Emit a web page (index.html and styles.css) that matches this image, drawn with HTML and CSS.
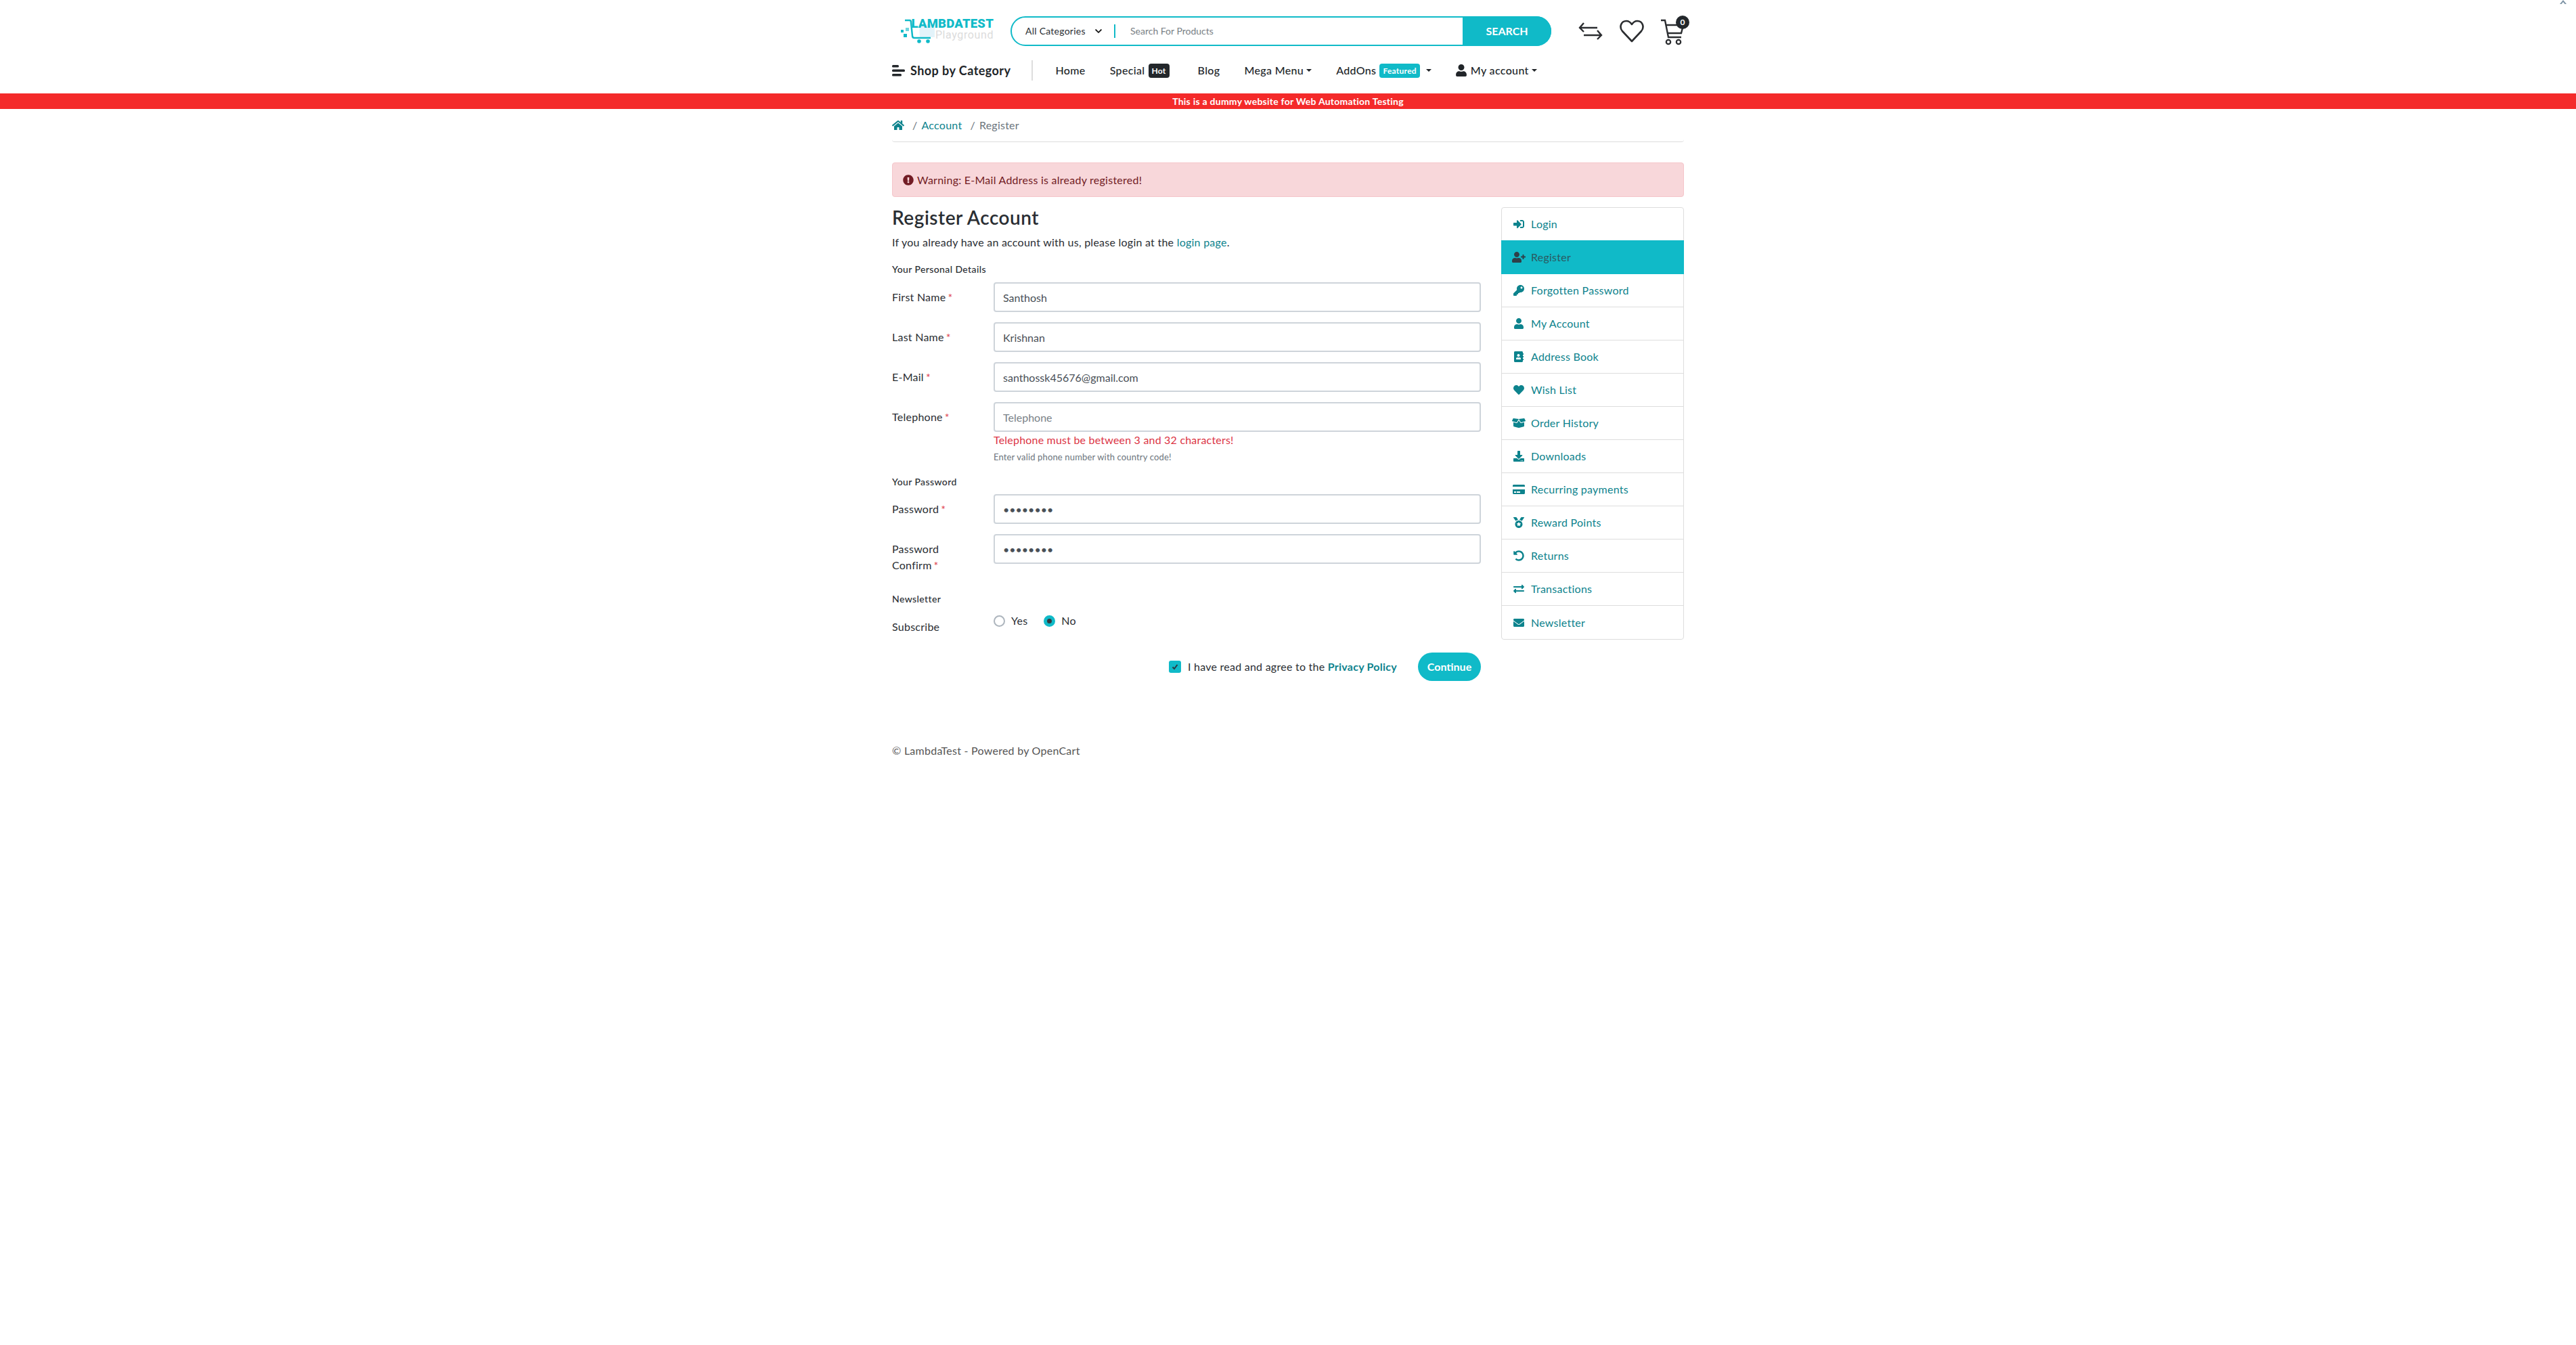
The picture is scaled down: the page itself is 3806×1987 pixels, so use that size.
FILE: index.html
```html
<!DOCTYPE html>
<html lang="en">
<head>
    <meta charset="UTF-8">
    <title>Register Account</title>
    <link rel="stylesheet" href="styles.css">
</head>
<body>
    <svg class="corner-mark" viewBox="0 0 10 6"><path d="M0 6 L5 0 L10 6 L7.5 6 L5 3 L2.5 6 Z"/></svg>

    <header class="wrap">
        <div class="top-row">
            <a class="logo" href="#">
                <svg class="logo-cart" viewBox="0 0 60 50">
                    <path d="M37 23 H62 L60 42 H38 Z" fill="#e3f3fa"/>
                    <path d="M16 17 H23 Q25 17 25 20 L27 40 Q27 43 30 43 H54" fill="none" stroke="#10bac8" stroke-width="2.5"/>
                    <rect x="10" y="31" width="4" height="4" fill="#10bac8"/>
                    <rect x="17" y="28" width="5" height="5" fill="#6fd5de"/>
                    <rect x="14" y="37" width="5" height="5" fill="#10bac8"/>
                    <circle cx="37" cy="48" r="2.8" fill="#10bac8"/>
                    <circle cx="50" cy="48" r="2.8" fill="#10bac8"/>
                </svg>
                <span class="logo-name">LAMBDATEST</span>
                <span class="logo-sub">Playground</span>
            </a>
            <form class="search">
                <div class="search-cat">All Categories
                    <svg viewBox="0 0 448 512"><path d="M207 381.5L12.7 187.1c-9.4-9.4-9.4-24.6 0-33.9l22.7-22.7c9.4-9.4 24.5-9.4 33.9 0L224 284.5l154.7-154c9.4-9.3 24.5-9.3 33.9 0l22.7 22.7c9.4 9.4 9.4 24.6 0 33.9L241 381.5c-9.4 9.4-24.6 9.4-34 0z"/></svg>
                </div>
                <input class="search-input" type="text" placeholder="Search For Products">
                <button class="search-btn" type="button">SEARCH</button>
            </form>
            <div class="actions">
                <svg class="act-compare" viewBox="0 0 36 28"><path d="M8 2 L2 9 L8 15 M2 9 H28 M28 13 L34 20 L28 26 M34 20 H8" fill="none" stroke="#2b2d30" stroke-width="2.4"/></svg>
                <svg class="act-heart" viewBox="0 0 36 36"><path d="M18 33 L4 18 C-1 12 2 3 10 3 C14 3 16 5 18 8 C20 5 22 3 26 3 C34 3 37 12 32 18 Z" fill="none" stroke="#2b2d30" stroke-width="2.6" stroke-linejoin="round"/></svg>
                <div class="cart">
                    <svg viewBox="0 0 36 42"><path d="M1 5 H7 L12 30 H31 M9 12 H34 L31 24 H11" fill="none" stroke="#2b2d30" stroke-width="2.4"/><circle cx="12" cy="37" r="3.2" fill="none" stroke="#2b2d30" stroke-width="2.2"/><circle cx="27" cy="37" r="3.2" fill="none" stroke="#2b2d30" stroke-width="2.2"/></svg>
                    <span class="cart-count">0</span>
                </div>
            </div>
        </div>

        <nav class="nav-row">
            <a class="shop-by" href="#">
                <svg viewBox="0 0 20 18"><rect x="0" y="1" width="10" height="3.4" rx="1.5"/><rect x="0" y="7.5" width="19" height="3.4" rx="1.5"/><rect x="0" y="14" width="14" height="3.4" rx="1.5"/></svg>
                Shop by Category
            </a>
            <ul class="menu">
                <li><a href="#">Home</a></li>
                <li class="menu-hot"><a href="#">Special</a><span class="tag tag-dark">Hot</span></li>
                <li><a href="#">Blog</a></li>
                <li><a href="#">Mega Menu</a><i class="caret"></i></li>
                <li><a href="#">AddOns</a><span class="tag tag-teal">Featured</span><i class="caret caret-far"></i></li>
                <li><svg class="menu-user" viewBox="0 0 448 512"><path d="M224 256c70.7 0 128-57.3 128-128S294.7 0 224 0 96 57.3 96 128s57.3 128 128 128zm89.6 32h-16.7c-22.2 10.2-46.9 16-72.9 16s-50.6-5.8-72.9-16h-16.7C60.2 288 0 348.2 0 422.4V464c0 26.5 21.5 48 48 48h352c26.5 0 48-21.5 48-48v-41.6c0-74.2-60.2-134.4-134.4-134.4z"/></svg><a href="#">My account</a><i class="caret"></i></li>
            </ul>
        </nav>
    </header>

    <div class="notice">This is a dummy website for Web Automation Testing</div>

    <main class="wrap">
        <div class="crumbs">
            <svg viewBox="0 0 576 512"><path d="M280.37 148.26L96 300.11V464a16 16 0 0 0 16 16l112.06-.29a16 16 0 0 0 15.92-16V368a16 16 0 0 1 16-16h64a16 16 0 0 1 16 16v95.64a16 16 0 0 0 16 16.05L464 480a16 16 0 0 0 16-16V300L295.67 148.26a12.19 12.19 0 0 0-15.3 0zM571.6 251.47L488 182.56V44.05a12 12 0 0 0-12-12h-56a12 12 0 0 0-12 12v72.61L318.47 43a48 48 0 0 0-61 0L4.34 251.47a12 12 0 0 0-1.6 16.9l25.5 31A12 12 0 0 0 45.15 301l235.22-193.74a12.19 12.19 0 0 1 15.3 0L530.9 301a12 12 0 0 0 16.9-1.6l25.5-31a12 12 0 0 0-1.7-16.93z"/></svg>
            <span class="crumb-sep">/</span><a href="#">Account</a>
            <span class="crumb-sep">/</span><span class="crumb-now">Register</span>
        </div>

        <div class="alert">
            <svg viewBox="0 0 512 512"><path d="M504 256c0 136.997-111.043 248-248 248S8 392.997 8 256C8 119.083 119.043 8 256 8s248 111.083 248 248zm-248 50c-25.405 0-46 20.595-46 46s20.595 46 46 46 46-20.595 46-46-20.595-46-46-46zm-43.673-165.346l7.418 136c.347 6.364 5.609 11.346 11.982 11.346h48.546c6.373 0 11.635-4.982 11.982-11.346l7.418-136c.375-6.874-5.098-12.654-11.982-12.654h-63.383c-6.884 0-12.356 5.78-11.981 12.654z"/></svg>
            Warning: E-Mail Address is already registered!
        </div>

        <div class="columns">
            <section class="content">
                <h1>Register Account</h1>
                <p class="intro">If you already have an account with us, please login at the <a href="#">login page</a>.</p>

                <form>
                    <h2 class="legend">Your Personal Details</h2>
                    <div class="field">
                        <label>First Name<b>*</b></label>
                        <div class="field-box"><input type="text" value="Santhosh"></div>
                    </div>
                    <div class="field">
                        <label>Last Name<b>*</b></label>
                        <div class="field-box"><input type="text" value="Krishnan"></div>
                    </div>
                    <div class="field">
                        <label>E-Mail<b>*</b></label>
                        <div class="field-box"><input type="text" value="santhossk45676@gmail.com"></div>
                    </div>
                    <div class="field field-tel">
                        <label>Telephone<b>*</b></label>
                        <div class="field-box">
                            <input type="text" placeholder="Telephone">
                            <div class="error">Telephone must be between 3 and 32 characters!</div>
                            <small class="help">Enter valid phone number with country code!</small>
                        </div>
                    </div>

                    <h2 class="legend legend-pass">Your Password</h2>
                    <div class="field">
                        <label>Password<b>*</b></label>
                        <div class="field-box"><input type="password" value="12345678"></div>
                    </div>
                    <div class="field">
                        <label class="label-narrow">Password Confirm<b>*</b></label>
                        <div class="field-box"><input type="password" value="12345678"></div>
                    </div>

                    <h2 class="legend legend-news">Newsletter</h2>
                    <div class="field field-sub">
                        <label>Subscribe</label>
                        <div class="radios">
                            <span class="radio"></span><span class="radio-text">Yes</span>
                            <span class="radio radio-on"></span><span class="radio-text">No</span>
                        </div>
                    </div>

                    <div class="agree">
                        <span class="check"><svg viewBox="0 0 12 12"><path d="M2.5 6.5 L5 9 L9.5 3" fill="none" stroke="#2a3a44" stroke-width="2"/></svg></span>
                        <span>I have read and agree to the <a href="#">Privacy Policy</a></span>
                        <button class="continue" type="button">Continue</button>
                    </div>
                </form>
            </section>

            <aside class="side">
                <a class="side-item" href="#"><svg viewBox="0 0 512 512"><path d="M416 448h-84c-6.6 0-12-5.4-12-12v-40c0-6.6 5.4-12 12-12h84c17.7 0 32-14.3 32-32V160c0-17.7-14.3-32-32-32h-84c-6.6 0-12-5.4-12-12V76c0-6.6 5.4-12 12-12h84c53 0 96 43 96 96v192c0 53-43 96-96 96zm-47-201L201 79c-15-15-41-4.5-41 17v96H24c-13.3 0-24 10.7-24 24v96c0 13.3 10.7 24 24 24h136v96c0 21.5 26 32 41 17l168-168c9.3-9.4 9.3-24.6 0-34z"/></svg>Login</a>
                <a class="side-item active" href="#"><svg viewBox="0 0 640 512"><path d="M624 208h-64v-64c0-8.8-7.2-16-16-16h-32c-8.8 0-16 7.2-16 16v64h-64c-8.8 0-16 7.2-16 16v32c0 8.8 7.2 16 16 16h64v64c0 8.8 7.2 16 16 16h32c8.8 0 16-7.2 16-16v-64h64c8.8 0 16-7.2 16-16v-32c0-8.8-7.2-16-16-16zm-400 48c70.7 0 128-57.3 128-128S294.7 0 224 0 96 57.3 96 128s57.3 128 128 128zm89.6 32h-16.7c-22.2 10.2-46.9 16-72.9 16s-50.6-5.8-72.9-16h-16.7C60.2 288 0 348.2 0 422.4V464c0 26.5 21.5 48 48 48h352c26.5 0 48-21.5 48-48v-41.6c0-74.2-60.2-134.4-134.4-134.4z"/></svg>Register</a>
                <a class="side-item" href="#"><svg viewBox="0 0 512 512"><path d="M512 176.001C512 273.203 433.202 352 336 352c-11.22 0-22.19-1.062-32.827-3.069l-24.012 27.014A23.999 23.999 0 0 1 261.223 384H224v40c0 13.255-10.745 24-24 24h-40v40c0 13.255-10.745 24-24 24H24c-13.255 0-24-10.745-24-24v-78.059c0-6.365 2.529-12.47 7.029-16.971l161.802-161.802C163.108 213.814 160 195.271 160 176 160 78.798 238.797.001 335.999 0 433.488-.001 512 78.511 512 176.001zM336 128c0 26.51 21.49 48 48 48s48-21.49 48-48-21.49-48-48-48-48 21.49-48 48z"/></svg>Forgotten Password</a>
                <a class="side-item" href="#"><svg viewBox="0 0 448 512"><path d="M224 256c70.7 0 128-57.3 128-128S294.7 0 224 0 96 57.3 96 128s57.3 128 128 128zm89.6 32h-16.7c-22.2 10.2-46.9 16-72.9 16s-50.6-5.8-72.9-16h-16.7C60.2 288 0 348.2 0 422.4V464c0 26.5 21.5 48 48 48h352c26.5 0 48-21.5 48-48v-41.6c0-74.2-60.2-134.4-134.4-134.4z"/></svg>My Account</a>
                <a class="side-item" href="#"><svg viewBox="0 0 448 512"><path d="M436 160c6.6 0 12-5.4 12-12v-40c0-6.6-5.4-12-12-12h-20V48c0-26.5-21.5-48-48-48H48C21.5 0 0 21.5 0 48v416c0 26.5 21.5 48 48 48h320c26.5 0 48-21.5 48-48v-48h20c6.6 0 12-5.4 12-12v-40c0-6.6-5.4-12-12-12h-20v-64h20c6.6 0 12-5.4 12-12v-40c0-6.6-5.4-12-12-12h-20v-64h20zm-228-32c35.3 0 64 28.7 64 64s-28.7 64-64 64-64-28.7-64-64 28.7-64 64-64zm112 236.8c0 10.6-10 19.2-22.4 19.2H118.4C106 384 96 375.4 96 364.8v-19.2c0-31.8 30.1-57.6 67.2-57.6h5c12.3 5.1 25.7 8 39.8 8s27.6-2.9 39.8-8h5c37.1 0 67.2 25.8 67.2 57.6v19.2z"/></svg>Address Book</a>
                <a class="side-item" href="#"><svg viewBox="0 0 512 512"><path d="M462.3 62.6C407.5 15.9 326 24.3 275.7 76.2L256 96.5l-19.7-20.3C186.1 24.3 104.5 15.9 49.7 62.6c-62.8 53.6-66.1 149.8-9.9 207.9l193.5 199.8c12.5 12.9 32.8 12.9 45.3 0l193.5-199.8c56.3-58.1 53-154.3-9.8-207.9z"/></svg>Wish List</a>
                <a class="side-item" href="#"><svg viewBox="0 0 640 512"><path d="M425.7 256c-16.9 0-32.8-9-41.4-23.4L320 126l-64.2 106.6c-8.7 14.5-24.6 23.5-41.5 23.5-4.5 0-9-.6-13.3-1.9L64 215v178c0 14.7 10 27.5 24.2 31l216.2 54.1c10.2 2.5 20.9 2.5 31 0L551.8 424c14.2-3.6 24.2-16.4 24.2-31V215l-137 39.1c-4.3 1.3-8.8 1.9-13.3 1.9zm212.6-112.2L586.8 41c-3.1-6.2-9.8-9.8-16.7-8.9L320 64l91.7 152.1c3.8 6.3 11.4 9.3 18.5 7.3l197.9-56.5c9.9-2.9 14.7-13.9 10.2-23.1zM53.2 41L1.7 143.8c-4.6 9.2.3 20.2 10.1 23l197.9 56.5c7.1 2 14.7-1 18.5-7.3L320 64 69.8 32.1c-6.9-.8-13.5 2.7-16.6 8.9z"/></svg>Order History</a>
                <a class="side-item" href="#"><svg viewBox="0 0 512 512"><path d="M216 0h80c13.3 0 24 10.7 24 24v168h87.7c17.8 0 26.7 21.5 14.1 34.1L269.7 378.3c-7.5 7.5-19.8 7.5-27.3 0L90.1 226.1c-12.6-12.6-3.7-34.1 14.1-34.1H192V24c0-13.3 10.7-24 24-24zm296 376v112c0 13.3-10.7 24-24 24H24c-13.3 0-24-10.7-24-24V376c0-13.3 10.7-24 24-24h146.7l49 49c20.1 20.1 52.5 20.1 72.6 0l49-49H488c13.3 0 24 10.7 24 24zm-124 88c0-11-9-20-20-20s-20 9-20 20 9 20 20 20 20-9 20-20zm64 0c0-11-9-20-20-20s-20 9-20 20 9 20 20 20 20-9 20-20z"/></svg>Downloads</a>
                <a class="side-item" href="#"><svg viewBox="0 0 576 512"><path d="M0 432c0 26.5 21.5 48 48 48h480c26.5 0 48-21.5 48-48V256H0v176zm192-68c0-6.6 5.4-12 12-12h136c6.6 0 12 5.4 12 12v40c0 6.6-5.4 12-12 12H204c-6.6 0-12-5.4-12-12v-40zm-128 0c0-6.6 5.4-12 12-12h72c6.6 0 12 5.4 12 12v40c0 6.6-5.4 12-12 12H76c-6.6 0-12-5.4-12-12v-40zM576 80v48H0V80c0-26.5 21.5-48 48-48h480c26.5 0 48 21.5 48 48z"/></svg>Recurring payments</a>
                <a class="side-item" href="#"><svg viewBox="0 0 512 512"><path d="M223.75 130.75L154.62 15.54A31.997 31.997 0 0 0 127.18 0H16.03C3.08 0-4.5 14.57 2.92 25.18l111.27 158.96c29.72-27.77 67.52-46.83 109.56-53.39zM495.97 0H384.82c-11.24 0-21.66 5.9-27.44 15.54l-69.13 115.21c42.04 6.56 79.84 25.62 109.56 53.38L509.08 25.18C516.5 14.57 508.92 0 495.97 0zM256 160c-97.2 0-176 78.8-176 176s78.8 176 176 176 176-78.8 176-176-78.8-176-176-176zm92.52 157.26l-37.93 36.96 8.97 52.22c1.6 9.36-8.26 16.51-16.65 12.09L256 393.88l-46.9 24.65c-8.4 4.45-18.25-2.74-16.65-12.09l8.97-52.22-37.93-36.96c-6.82-6.64-3.05-18.23 6.35-19.59l52.43-7.64 23.43-47.52c2.11-4.28 6.19-6.39 10.28-6.39 4.11 0 8.22 2.14 10.33 6.39l23.43 47.52 52.43 7.64c9.4 1.36 13.17 12.95 6.35 19.59z"/></svg>Reward Points</a>
                <a class="side-item" href="#"><svg viewBox="0 0 512 512"><path d="M255.545 8c-66.269.119-126.438 26.233-170.86 68.685L48.971 40.971C33.851 25.851 8 36.559 8 57.941V192c0 13.255 10.745 24 24 24h134.059c21.382 0 32.09-25.851 16.971-40.971l-41.75-41.75c30.864-28.899 70.801-44.907 113.23-45.273 92.398-.798 170.283 73.977 169.484 169.442C423.236 348.009 349.816 424 256 424c-41.127 0-79.997-14.678-110.63-41.556-4.743-4.161-11.906-3.908-16.368.553L89.34 422.659c-4.872 4.872-4.631 12.815.482 17.433C133.798 479.813 192.074 504 256 504c136.966 0 247.999-111.033 248-247.998C504.001 119.193 392.354 7.755 255.545 8z"/></svg>Returns</a>
                <a class="side-item" href="#"><svg viewBox="0 0 512 512"><path d="M0 168v-16c0-13.255 10.745-24 24-24h360V80c0-21.367 25.899-32.042 40.971-16.971l80 80c9.372 9.373 9.372 24.569 0 33.941l-80 80C409.956 271.982 384 261.456 384 240v-48H24c-13.255 0-24-10.745-24-24zm488 152H128v-48c0-21.314-25.862-32.08-40.971-16.971l-80 80c-9.372 9.373-9.372 24.569 0 33.941l80 80C102.057 463.997 128 453.437 128 432v-48h360c13.255 0 24-10.745 24-24v-16c0-13.255-10.745-24-24-24z"/></svg>Transactions</a>
                <a class="side-item" href="#"><svg viewBox="0 0 512 512"><path d="M502.3 190.8c3.9-3.1 9.7-.2 9.7 4.7V400c0 26.5-21.5 48-48 48H48c-26.5 0-48-21.5-48-48V195.6c0-5 5.7-7.8 9.7-4.7 22.4 17.4 52.1 39.5 154.1 113.6 21.1 15.4 56.7 47.8 92.2 47.6 35.7.3 72-32.8 92.3-47.6 102-74.1 131.6-96.3 154-113.7zM256 320c23.2.4 56.6-29.2 73.4-41.4 132.7-96.3 142.8-104.7 173.4-128.7 5.8-4.5 9.2-11.5 9.2-18.9v-19c0-26.5-21.5-48-48-48H48C21.5 64 0 85.5 0 112v19c0 7.4 3.4 14.3 9.2 18.9 30.6 23.9 40.7 32.4 173.4 128.7 16.8 12.2 50.2 41.8 73.4 41.4z"/></svg>Newsletter</a>
            </aside>
        </div>

        <footer class="foot">© LambdaTest - Powered by OpenCart</footer>
    </main>
</body>
</html>
```

FILE: styles.css
```css
* {
    box-sizing: border-box;
}

body {
    margin: 0;
    background: #fff;
    color: #2a2e33;
    font-family: "Lato", "Noto Sans", sans-serif;
    font-size: 16px;
    line-height: 24px;
    letter-spacing: .25px;
}

a {
    color: #0d838d;
    text-decoration: none;
}

.corner-mark {
    position: absolute;
    top: 0;
    right: 14px;
    width: 10px;
    height: 6px;
    fill: #7d93a5;
}

.wrap {
    width: 1170px;
    margin: 0 auto;
}

/* header */
.top-row {
    display: flex;
    align-items: flex-start;
    padding-top: 24px;
    height: 68px;
}

.logo {
    position: relative;
    display: flex;
    flex-direction: column;
    align-items: flex-end;
    flex: none;
    width: 150px;
    margin-right: 25px;
    padding-top: 3px;
}

.logo-cart {
    position: absolute;
    top: -12px;
    left: 3px;
    width: 60px;
    height: 52px;
}

.logo-name {
    position: relative;
    font-family: "Roboto", sans-serif;
    font-size: 18.5px;
    font-weight: 900;
    line-height: 16px;
    letter-spacing: .2px;
    color: #10bac8;
}

.logo-sub {
    position: relative;
    font-family: "Roboto", sans-serif;
    font-size: 16px;
    line-height: 17px;
    color: #dcdcdc;
    letter-spacing: .6px;
}

.search {
    display: flex;
    align-items: stretch;
    flex: none;
    width: 799px;
    height: 44px;
    border: 2px solid #10bac8;
    border-radius: 22px;
}

.search-cat {
    display: flex;
    align-items: center;
    flex: none;
    width: 153px;
    padding-left: 20px;
    font-size: 14px;
    position: relative;
}

.search-cat svg {
    width: 10px;
    height: 12px;
    margin-left: 14px;
    fill: #111;
}

.search-cat::after {
    content: "";
    position: absolute;
    right: 0;
    top: 10px;
    bottom: 10px;
    width: 2px;
    background: #10bac8;
}

.search-input {
    flex: 1;
    min-width: 0;
    border: 0;
    outline: 0;
    padding: 0 22px;
    font: inherit;
    font-size: 14px;
}

.search-input::placeholder {
    color: #7a7f85;
    opacity: 1;
}

.search-btn {
    flex: none;
    width: 131px;
    margin: -2px;
    border: 0;
    border-radius: 0 22px 22px 0;
    background: #10bac8;
    color: #fff;
    font: inherit;
    font-size: 16px;
    font-weight: 700;
}

.actions {
    display: flex;
    align-items: center;
    gap: 25px;
    margin-left: 40px;
    height: 44px;
}

.act-compare {
    width: 36px;
    height: 28px;
}

.act-heart {
    width: 36px;
    height: 36px;
}

.cart {
    position: relative;
    width: 36px;
    height: 42px;
    margin-left: -1px;
}

.cart svg {
    width: 36px;
    height: 42px;
}

.cart-count {
    position: absolute;
    top: -2px;
    right: -7px;
    width: 20px;
    height: 20px;
    border-radius: 50%;
    background: #23272b;
    color: #fff;
    font-size: 12px;
    font-weight: 700;
    line-height: 20px;
    text-align: center;
}

/* nav row */
.nav-row {
    display: flex;
    align-items: center;
    height: 70px;
    padding-top: 2px;
}

.shop-by {
    display: flex;
    align-items: center;
    color: #212529;
    font-size: 18px;
    font-weight: 700;
    letter-spacing: .45px;
    padding-right: 31px;
    border-right: 2px solid #ddd;
    height: 30px;
}

.shop-by svg {
    width: 20px;
    height: 18px;
    margin-right: 7px;
    fill: #23272b;
}

.menu {
    display: flex;
    align-items: center;
    gap: 36px;
    margin: 0 0 0 33px;
    padding: 0;
    list-style: none;
}

.menu li {
    display: flex;
    align-items: center;
    font-weight: 500;
}

.menu a {
    color: #212529;
    letter-spacing: .35px;
}

.menu-hot {
    margin-right: 6px;
}

.tag {
    margin-left: 5px;
    padding: 0 5px;
    border-radius: 4px;
    color: #fff;
    font-size: 12px;
    font-weight: 700;
    line-height: 21px;
}

.tag-dark {
    background: #23272b;
}

.tag-teal {
    background: #10bac8;
}

.caret {
    margin-left: 4px;
    border-top: 4.5px solid #212529;
    border-left: 4.5px solid transparent;
    border-right: 4.5px solid transparent;
}

.caret-far {
    margin-left: 9px;
}

.menu-user {
    width: 16px;
    height: 18px;
    margin-right: 6px;
    fill: #212529;
}

.notice {
    height: 23px;
    background: #f42a2a;
    color: #fff;
    font-size: 14px;
    font-weight: 700;
    line-height: 23px;
    text-align: center;
}

/* page */
.crumbs {
    display: flex;
    align-items: center;
    height: 49px;
    border-bottom: 1px solid #ddd;
    border-radius: 0 0 4px 4px;
    font-size: 16px;
}

.crumbs svg {
    width: 18px;
    height: 16px;
    fill: #0d838d;
}

.crumb-sep {
    margin: 0 6px 0 12px;
    color: #6c757d;
}

.crumb-now {
    color: #6c757d;
}

.alert {
    display: flex;
    align-items: center;
    height: 51px;
    margin: 30px 0 15px;
    padding: 0 15px;
    border: 1px solid #f5c6cb;
    border-radius: 4px;
    background: #f8d7da;
    color: #721c24;
}

.alert svg {
    width: 16px;
    height: 16px;
    margin-right: 5px;
    fill: #721c24;
}

.columns {
    display: flex;
    justify-content: space-between;
    align-items: flex-start;
}

.content {
    width: 870px;
}

h1 {
    margin: 0;
    font-size: 28px;
    font-weight: 600;
    line-height: 30px;
    letter-spacing: .5px;
}

.intro {
    margin: 10px 0 0;
}

.legend {
    margin: 16px 0 7px;
    font-size: 14px;
    font-weight: 500;
    line-height: 24px;
    letter-spacing: .4px;
}

.legend-pass {
    margin: 14px 0 6px;
}

.legend-news {
    margin: 26px 0 0;
}

.field {
    display: flex;
    margin-bottom: 15px;
}

.field label {
    flex: none;
    width: 150px;
    padding-top: 10px;
}

.label-narrow {
    padding-right: 70px;
}

.field b {
    margin-left: 3px;
    color: #dc3545;
    font-weight: 400;
}

.field-box {
    flex: 1;
}

.field-box input {
    display: block;
    width: 720px;
    height: 44px;
    padding: 0 12px;
    border: 2px solid #ced4da;
    border-radius: 4px;
    color: #495057;
    font: inherit;
    outline: 0;
}

.field-box input::placeholder {
    color: #7a8288;
    opacity: 1;
}

.error {
    color: #dc3545;
    line-height: 24px;
    letter-spacing: .2px;
}

.help {
    display: block;
    margin-top: 2px;
    color: #6c757d;
    font-size: 13px;
    line-height: 22px;
    letter-spacing: .15px;
}

.field-tel {
    margin-bottom: 0;
}

.field-sub label {
    padding-top: 17px;
}

.field-sub {
    height: 47px;
    margin-bottom: 0;
}

.radios {
    display: flex;
    align-items: center;
    height: 24px;
    margin-top: 8px;
}

.radio {
    width: 17px;
    height: 17px;
    border: 2px solid #adb5bd;
    border-radius: 50%;
}

.radio-on {
    border: 5.5px solid #10bac8;
    background: #343a40;
}

.radio-text {
    margin: 0 24px 0 9px;
}

.agree {
    display: flex;
    align-items: center;
    justify-content: flex-end;
    width: 870px;
    height: 42px;
    margin-top: 20px;
}

.agree a {
    font-weight: 700;
}

.check {
    display: flex;
    flex: none;
    width: 18px;
    height: 18px;
    margin-right: 10px;
    padding: 3px;
    border-radius: 3px;
    background: #10bac8;
}

.continue {
    width: 93px;
    height: 42px;
    margin-left: 31px;
    border: 0;
    border-radius: 21px;
    background: #10bac8;
    color: #fff;
    font: inherit;
    font-weight: 700;
}

.side {
    display: flex;
    flex-direction: column;
    width: 270px;
    border: 1px solid #ddd;
    border-radius: 4px;
}

.side-item {
    display: flex;
    align-items: center;
    height: 49px;
    padding-left: 15px;
    border-bottom: 1px solid #ddd;
    color: #0d838d;
}

.side-item:first-child {
    height: 48px;
    border-bottom: 0;
}

.side-item:last-child {
    border-bottom: 0;
}

.side-item svg {
    flex: none;
    width: 20px;
    height: 16px;
    margin-right: 8px;
    fill: #0d838d;
}

.side-item.active {
    margin: 0 -1px;
    padding-left: 16px;
    border-bottom: 0;
    height: 50px;
    background: #10bac8;
    color: #2a5a62;
}

.side-item.active svg {
    fill: #2f3f48;
}

.foot {
    margin-top: 91px;
    color: #555;
}
```
